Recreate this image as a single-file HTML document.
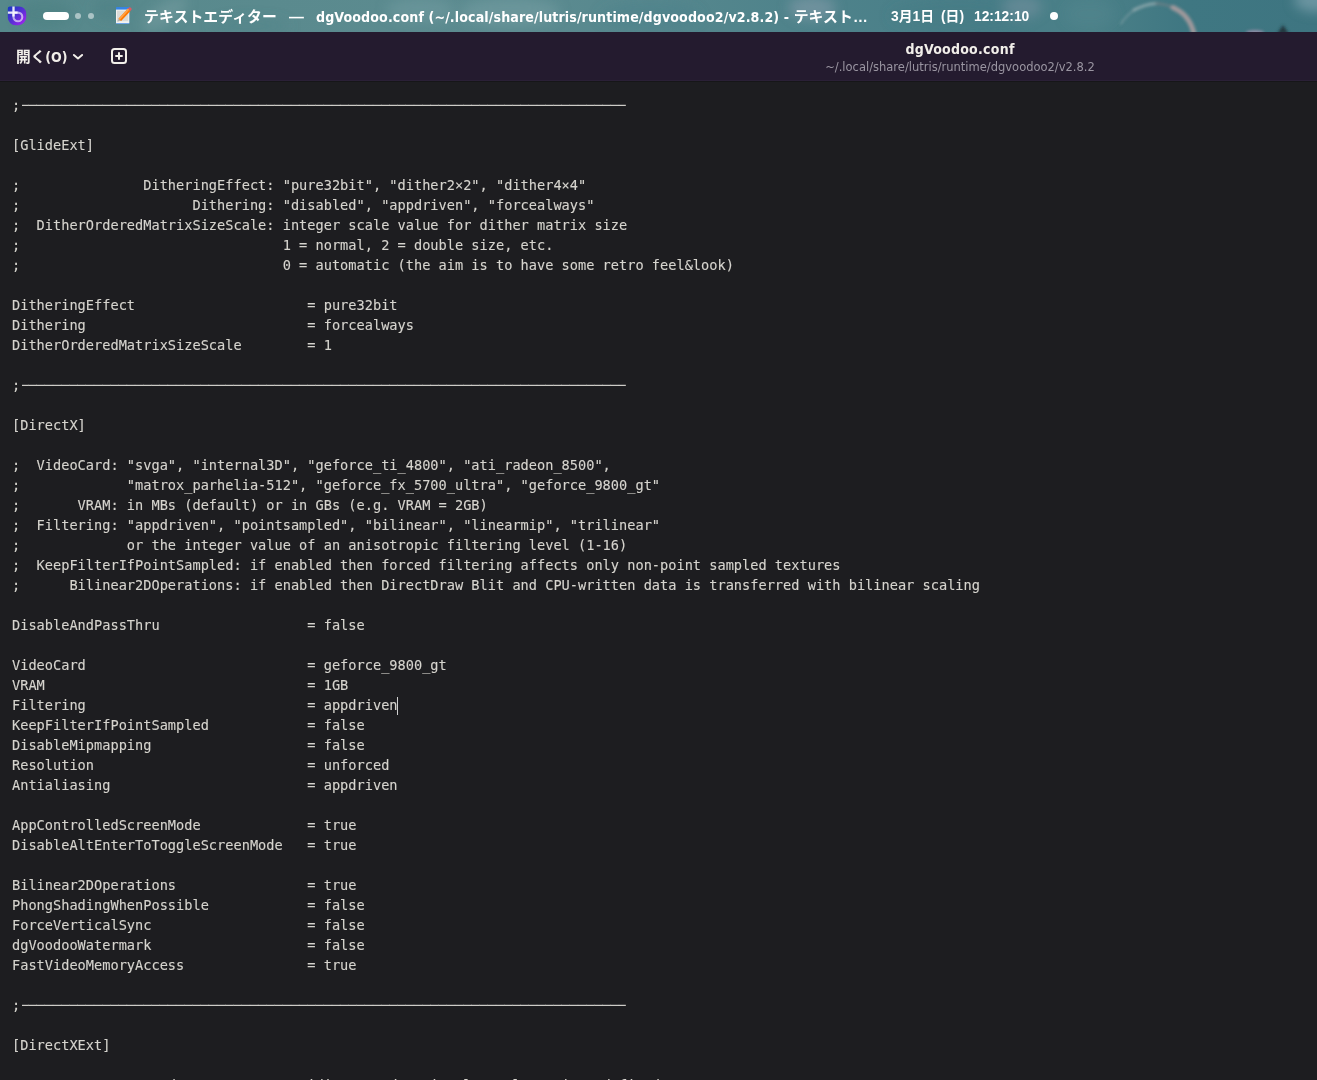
<!DOCTYPE html>
<html lang="ja">
<head>
<meta charset="utf-8">
<title>dgVoodoo.conf</title>
<style>
html,body{margin:0;padding:0;}
body{width:1317px;height:1080px;overflow:hidden;background:#1d1d20;position:relative;font-family:"Liberation Sans","Noto Sans CJK JP",sans-serif;}
#topbar{position:absolute;left:0;top:0;width:1317px;height:32px;overflow:hidden;
 background:linear-gradient(90deg,#5b8b8f 0%,#588a8e 25%,#4f8389 50%,#47808a 70%,#3f7884 85%,#3a7380 100%);color:#fff;}
#topbar .t{position:absolute;top:1px;height:32px;line-height:32px;white-space:nowrap;font-family:"DejaVu Sans Condensed","Liberation Sans","Noto Sans CJK JP",sans-serif;font-size:14.1px;letter-spacing:0.1px;font-weight:bold;color:#fff;}
#topbar .d{font-family:"Liberation Sans","Noto Sans CJK JP",sans-serif;font-size:13.8px;letter-spacing:0;}
#topbar .j{font-family:"Liberation Sans","Noto Sans CJK JP",sans-serif;font-size:14.85px;}
#topbar .t.j{top:1px;}
#header{position:absolute;left:0;top:32px;width:1317px;height:49px;background:#241b2f;box-shadow:inset 0 -1px 0 #2a2036;}
#header:after{content:"";position:absolute;left:0;right:0;bottom:-1px;height:1px;background:#161618;}
#header .open{position:absolute;left:16px;top:1px;height:48px;line-height:48px;font-size:14.67px;font-weight:bold;color:#f2efea;white-space:nowrap;}
#header .title{position:absolute;left:760px;width:400px;top:7px;text-align:center;font-family:"DejaVu Sans Condensed","Liberation Sans",sans-serif;font-size:14px;letter-spacing:0.25px;font-weight:bold;color:#f2efea;line-height:20px;white-space:nowrap;}
#header .sub{position:absolute;left:760px;width:400px;top:27px;text-align:center;font-family:"DejaVu Sans","Liberation Sans",sans-serif;font-size:11.5px;color:#9a95a1;line-height:16px;white-space:nowrap;}
#editor{position:absolute;left:12px;top:95px;margin:0;font-family:"DejaVu Sans Mono","Liberation Mono",monospace;font-size:13.64px;line-height:20px;color:#d6d4ce;-webkit-text-stroke:0.12px #d6d4ce;white-space:pre;}
#editor,#topbar .t,#header .open,#header .title,#header .sub{will-change:transform;}
#header .lo{font-family:"DejaVu Sans Condensed","Liberation Sans",sans-serif;font-size:14px;}
.ln{clip-path:inset(0 1.4px 0 1.8px);}
</style>
</head>
<body>
<div id="topbar">
<svg width="1317" height="32" viewBox="0 0 1317 32" style="position:absolute;left:0;top:0">
<defs>
<linearGradient id="wg" x1="0" x2="1" y1="0" y2="0">
<stop offset="0" stop-color="#56888b"/>
<stop offset="0.2" stop-color="#5a8a8e"/>
<stop offset="0.4" stop-color="#5c8b90"/>
<stop offset="0.6" stop-color="#4f838b"/>
<stop offset="0.75" stop-color="#487e88"/>
<stop offset="0.83" stop-color="#4b8088"/>
<stop offset="0.9" stop-color="#3f7782"/>
<stop offset="1" stop-color="#3e7581"/>
</linearGradient>
<filter id="bl" x="-20%" y="-50%" width="140%" height="200%"><feGaussianBlur stdDeviation="1.6"/></filter>
<filter id="bl2" x="-20%" y="-50%" width="140%" height="200%"><feGaussianBlur stdDeviation="6"/></filter>
</defs>
<rect width="1317" height="32" fill="url(#wg)"/>
<g filter="url(#bl2)">
<ellipse cx="45" cy="14" rx="28" ry="14" fill="#4a7f82" opacity="0.55"/>
<ellipse cx="110" cy="8" rx="16" ry="12" fill="#4a7f82" opacity="0.45"/>
<ellipse cx="165" cy="14" rx="26" ry="10" fill="#7aa0a3" opacity="0.5" transform="rotate(-35 165 14)"/>
<ellipse cx="250" cy="26" rx="40" ry="8" fill="#4d8286" opacity="0.4"/>
<ellipse cx="420" cy="10" rx="34" ry="12" fill="#75a0a4" opacity="0.45"/>
<ellipse cx="510" cy="12" rx="50" ry="14" fill="#779fa5" opacity="0.5"/>
<ellipse cx="650" cy="16" rx="50" ry="14" fill="#48808a" opacity="0.4"/>
<ellipse cx="812" cy="8" rx="24" ry="12" fill="#8f9fb0" opacity="0.5"/>
<ellipse cx="960" cy="16" rx="70" ry="16" fill="#417985" opacity="0.35"/>
<ellipse cx="1090" cy="14" rx="26" ry="14" fill="#5c8f96" opacity="0.22"/>
<ellipse cx="1022" cy="7" rx="20" ry="11" fill="#8a9cab" opacity="0.4"/>
<ellipse cx="1316" cy="0" rx="22" ry="12" fill="#7ea3ae" opacity="0.7"/>
</g>
<g filter="url(#bl)" fill="none" stroke-linecap="round">
<path d="M1121 24 Q1126 15 1136 9" stroke="#8fa9ad" stroke-width="1.6" opacity="0.6"/>
<path d="M1134 10 Q1144 4.5 1156 3.5" stroke="#a3b5b8" stroke-width="3" opacity="0.7"/>
<path d="M1156 3.5 Q1166 4 1174 8" stroke="#6f7f86" stroke-width="2.5" opacity="0.8"/>
<path d="M1173 7.5 Q1190 15 1194 34" stroke="#ab9c9e" stroke-width="5" opacity="0.9"/>
<ellipse cx="1255" cy="32.5" rx="9" ry="2.6" fill="#a894b0" stroke="none" opacity="0.8"/>
<path d="M1277 34 L1283 25 L1289 34 Z" fill="#1f3038" stroke="none" opacity="0.9"/>
</g>
</svg>
<svg width="20" height="20" viewBox="0 0 20 20" style="position:absolute;left:7px;top:6px">
<defs><linearGradient id="bz" x1="0" y1="0" x2="1" y2="1"><stop offset="0" stop-color="#1437c0"/><stop offset="0.5" stop-color="#5530d4"/><stop offset="1" stop-color="#b020f4"/></linearGradient></defs>
<path d="M2.8 0.4 H12.2 A7 7 0 0 1 19.2 7.4 V11.2 A8 8 0 0 1 11.2 19.2 H8.6 A7.8 7.8 0 0 1 0.8 11.4 V2.4 A2 2 0 0 1 2.8 0.4 Z" fill="url(#bz)"/>
<path d="M6.5 6.6 V10.9 A4.4 4.4 0 0 0 10.9 15.3 A4.4 4.4 0 0 0 15.3 10.9 A4.3 4.3 0 0 0 11 6.6 H6.5" fill="none" stroke="#fff" stroke-opacity="0.6" stroke-width="2.1"/>
<path d="M6.5 0.6 V10.4 M0.9 6.6 H10.6" fill="none" stroke="#fff" stroke-opacity="0.88" stroke-width="2.3"/>
</svg>
<div style="position:absolute;left:43px;top:12px;width:26px;height:8px;border-radius:4px;background:#fff"></div>
<div style="position:absolute;left:75px;top:13px;width:6px;height:6px;border-radius:3px;background:rgba(255,255,255,0.5)"></div>
<div style="position:absolute;left:88px;top:13px;width:6px;height:6px;border-radius:3px;background:rgba(255,255,255,0.5)"></div>
<svg width="18" height="18" viewBox="0 0 18 18" style="position:absolute;left:114px;top:6px">
<rect x="2" y="1" width="13.3" height="17" rx="0.8" fill="#3584e4"/>
<rect x="2" y="3.6" width="13.3" height="13.7" fill="#f4f3f0"/>
<rect x="3" y="4.6" width="11.3" height="10.6" fill="#dcdbd7"/>
<g transform="translate(-0.4 0.8)">
<path d="M3.6 14.9 L5.2 11.6 L7.6 13.8 Z" fill="#b9b4ad"/>
<path d="M4.9 11.9 L14.3 1.8 L16.9 4.2 L7.5 14.3 Z" fill="#ff7800"/>
<path d="M4.9 11.9 L14.3 1.8 L15.6 3 L6.2 13.1 Z" fill="#ffa348"/>
<path d="M14.3 1.8 L14.9 1.15 A1.7 1.7 0 0 1 17.5 3.55 L16.9 4.2 Z" fill="#dc5a66"/>
</g>
</svg>
<span class="t j" style="left:144px">テキストエディター</span>
<span class="t j" style="left:289px">—</span>
<span class="t" style="left:316px">dgVoodoo.conf (~/.local/share/lutris/runtime/dgvoodoo2/v2.8.2) - <span class="j">テキスト…</span></span>
<span class="t d" style="left:891px">3月1日</span><span class="t d" style="left:941px">(日)</span><span class="t d" style="left:974px">12:12:10</span>
<div style="position:absolute;left:1049.5px;top:11.8px;width:8.4px;height:8.4px;border-radius:4.2px;background:#fff"></div>
</div>
<div id="header">
<span class="open">開く<span class="lo">(O)</span></span>
<svg width="12" height="8" viewBox="0 0 12 8" style="position:absolute;left:72px;top:21px"><path d="M1.9 2 L6 5.5 L10.1 2" fill="none" stroke="#f2efea" stroke-width="2" stroke-linecap="round" stroke-linejoin="round"/></svg>
<svg width="16" height="16" viewBox="0 0 16 16" style="position:absolute;left:111px;top:16px"><rect x="1" y="1" width="14" height="14" rx="2.5" fill="none" stroke="#f2efea" stroke-width="2"/><path d="M8 4.3 V11.7 M4.3 8 H11.7" stroke="#f2efea" stroke-width="2" fill="none"/></svg>
<div class="title">dgVoodoo.conf</div>
<div class="sub">~/.local/share/lutris/runtime/dgvoodoo2/v2.8.2</div>
</div>
<div style="position:absolute;left:397px;top:697px;width:1px;height:18px;background:#d0d0d0"></div>
<pre id="editor">;<span class="ln">──────────────────────────────────────────────────────────────────────────</span>

[GlideExt]

;               DitheringEffect: "pure32bit", "dither2×2", "dither4×4"
;                     Dithering: "disabled", "appdriven", "forcealways"
;  DitherOrderedMatrixSizeScale: integer scale value for dither matrix size
;                                1 = normal, 2 = double size, etc.
;                                0 = automatic (the aim is to have some retro feel&amp;look)

DitheringEffect                     = pure32bit
Dithering                           = forcealways
DitherOrderedMatrixSizeScale        = 1

;<span class="ln">──────────────────────────────────────────────────────────────────────────</span>

[DirectX]

;  VideoCard: "svga", "internal3D", "geforce_ti_4800", "ati_radeon_8500",
;             "matrox_parhelia-512", "geforce_fx_5700_ultra", "geforce_9800_gt"
;       VRAM: in MBs (default) or in GBs (e.g. VRAM = 2GB)
;  Filtering: "appdriven", "pointsampled", "bilinear", "linearmip", "trilinear"
;             or the integer value of an anisotropic filtering level (1-16)
;  KeepFilterIfPointSampled: if enabled then forced filtering affects only non-point sampled textures
;      Bilinear2DOperations: if enabled then DirectDraw Blit and CPU-written data is transferred with bilinear scaling

DisableAndPassThru                  = false

VideoCard                           = geforce_9800_gt
VRAM                                = 1GB
Filtering                           = appdriven
KeepFilterIfPointSampled            = false
DisableMipmapping                   = false
Resolution                          = unforced
Antialiasing                        = appdriven

AppControlledScreenMode             = true
DisableAltEnterToToggleScreenMode   = true

Bilinear2DOperations                = true
PhongShadingWhenPossible            = false
ForceVerticalSync                   = false
dgVoodooWatermark                   = false
FastVideoMemoryAccess               = true

;<span class="ln">──────────────────────────────────────────────────────────────────────────</span>

[DirectXExt]

;                 AdapterIDType: "nvidia", "amd", "intel" or leave it undefined
</pre>
</body>
</html>
